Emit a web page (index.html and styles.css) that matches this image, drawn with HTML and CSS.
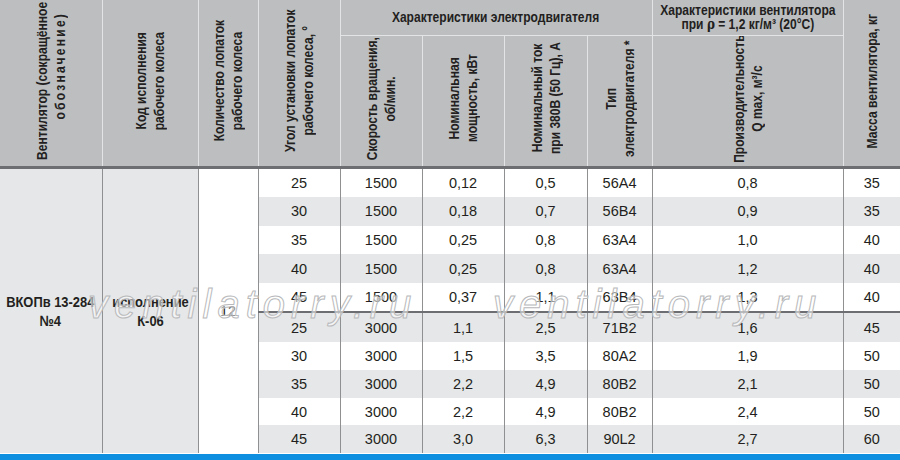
FILE: index.html
```html
<!DOCTYPE html>
<html lang="ru">
<head>
<meta charset="utf-8">
<title>ВКОПв 13-284 №4</title>
<link rel="stylesheet" href="styles.css">
</head>
<body>
<div class="page">
  <div class="sheet">
    <table class="spec">
      <colgroup>
        <col class="c1"><col class="c2"><col class="c3"><col class="c4"><col class="c5">
        <col class="c6"><col class="c7"><col class="c8"><col class="c9"><col class="c10">
      </colgroup>
      <thead>
        <tr class="hr1">
          <th rowspan="2" class="first bottom"><span class="vt">Вентилятор (сокращённое<br><span class="spaced">обозначение)</span></span></th>
          <th rowspan="2" class="bottom"><span class="vt">Код исполнения<br>рабочего колеса</span></th>
          <th rowspan="2" class="bottom"><span class="vt">Количество лопаток<br>рабочего колеса</span></th>
          <th rowspan="2" class="bottom"><span class="vt">Угол установки лопаток<br>рабочего колеса, °</span></th>
          <th colspan="4" class="group"><span class="hs">Характеристики электродвигателя</span></th>
          <th class="group group2"><span class="hs">Характеристики вентилятора<br>при <span class="rho">ρ</span> = 1,2 кг/м³ (20°C)</span></th>
          <th rowspan="2" class="last bottom"><span class="vt">Масса вентилятора, кг</span></th>
        </tr>
        <tr class="hr2">
          <th class="bottom"><span class="vt">Скорость вращения,<br>об/мин.</span></th>
          <th class="bottom"><span class="vt">Номинальная<br>мощность, кВт</span></th>
          <th class="bottom"><span class="vt">Номинальный ток<br>при 380В (50 Гц), А</span></th>
          <th class="bottom"><span class="vt">Тип<br>электродвигателя *</span></th>
          <th class="bottom"><span class="vt">Производительность<br>Q max, м³/с</span></th>
        </tr>
      </thead>
      <tbody>
        <tr>
          <td rowspan="10" class="model first"><span class="hs">ВКОПв 13-284<br>№4</span></td>
          <td rowspan="10" class="model"><span class="hs">исполнение<br>К-06</span></td>
          <td rowspan="10" class="blades">12</td>
          <td>25</td><td>1500</td><td>0,12</td><td>0,5</td><td class="type">56А4</td><td class="type">0,8</td><td class="last">35</td>
        </tr>
        <tr><td>30</td><td>1500</td><td>0,18</td><td>0,7</td><td class="type">56В4</td><td class="type">0,9</td><td class="last">35</td></tr>
        <tr><td>35</td><td>1500</td><td>0,25</td><td>0,8</td><td class="type">63А4</td><td class="type">1,0</td><td class="last">40</td></tr>
        <tr><td>40</td><td>1500</td><td>0,25</td><td>0,8</td><td class="type">63А4</td><td class="type">1,2</td><td class="last">40</td></tr>
        <tr><td>45</td><td>1500</td><td>0,37</td><td>1,1</td><td class="type">63В4</td><td class="type">1,3</td><td class="last">40</td></tr>
        <tr class="sep"><td>25</td><td>3000</td><td>1,1</td><td>2,5</td><td class="type">71В2</td><td class="type">1,6</td><td class="last">45</td></tr>
        <tr class="low"><td>30</td><td>3000</td><td>1,5</td><td>3,5</td><td class="type">80А2</td><td class="type">1,9</td><td class="last">50</td></tr>
        <tr class="low"><td>35</td><td>3000</td><td>2,2</td><td>4,9</td><td class="type">80В2</td><td class="type">2,1</td><td class="last">50</td></tr>
        <tr class="low"><td>40</td><td>3000</td><td>2,2</td><td>4,9</td><td class="type">80В2</td><td class="type">2,4</td><td class="last">50</td></tr>
        <tr class="low"><td>45</td><td>3000</td><td>3,0</td><td>6,3</td><td class="type">90L2</td><td class="type">2,7</td><td class="last">60</td></tr>
      </tbody>
    </table>
    <div class="wm wm1">ventilatorry.ru</div>
    <div class="wm wm2">ventilatorry.ru</div>
  </div>
  <div class="bluebar"></div>
</div>
</body>
</html>
```

FILE: styles.css
```css
html, body {
  margin: 0;
  padding: 0;
  background: #ffffff;
}

.page {
  width: 900px;
  height: 460px;
  overflow: hidden;
  display: flex;
  flex-direction: column;
}

.sheet {
  position: relative;
  flex: 1;
  overflow: hidden;
}

.bluebar {
  height: 6px;
  background: #0f8fe0;
}

.spec {
  width: 900px;
  table-layout: fixed;
  border-collapse: collapse;
  border-spacing: 0;
}

.c1 { width: 102px; }
.c2 { width: 96px; }
.c3 { width: 60px; }
.c4 { width: 82px; }
.c5 { width: 82px; }
.c6 { width: 82px; }
.c7 { width: 83px; }
.c8 { width: 65px; }
.c9 { width: 191px; }
.c10 { width: 57px; }

.spec th {
  background: #bcbec0;
  color: #231f20;
  font-family: "Liberation Sans", Arial, sans-serif;
  font-weight: bold;
  font-size: 14px;
  line-height: 18px;
  padding: 0;
  text-align: center;
  vertical-align: middle;
  border: 1px solid #e3e4e5;
  border-top: none;
  overflow: hidden;
}

.spec .hr1 { height: 35px; }
.spec .hr2 { height: 132px; }

.spec th.bottom {
  border-bottom: 3px solid #6d6e71;
}

.spec th.group {
  line-height: 14px;
  vertical-align: middle;
}

.rho {
  font-family: "DejaVu Serif", serif;
  font-weight: bold;
}

/* condensed bold look: the face is compressed along the reading direction */
.vt {
  display: inline-block;
  writing-mode: vertical-rl;
  transform: rotate(180deg) scaleY(0.86);
  margin: -40px 0;
  text-align: center;
  white-space: nowrap;
}

.hs {
  display: inline-block;
  transform: scaleX(0.86);
  margin: 0 -30px;
  white-space: nowrap;
}

.spaced {
  letter-spacing: 2.6px;
  padding-inline-start: 36px;
}

.spec .first { border-left: none; }
.spec .last { border-right: none; }

.spec td {
  height: 28.6px;
  padding: 0;
  text-align: center;
  vertical-align: middle;
  font-family: "Liberation Sans", Arial, sans-serif;
  font-size: 14.5px;
  color: #231f20;
  border-left: 1px solid #8f9092;
  border-right: 1px solid #8f9092;
  background: #ffffff;
}

.spec tbody tr:nth-child(even) td {
  background: #e6e7e8;
}

.spec tbody tr.low td { height: 27.8px; }

.spec td.type {
  border-left-color: #b5b6b8;
}

.spec tbody td.model {
  background: #e6e7e8;
  font-weight: bold;
  font-size: 15px;
  line-height: 19px;
}

.spec tbody td.blades {
  background: #ffffff;
}

.spec tr.sep td {
  border-top: 2px solid #6d6e71;
}

.wm {
  position: absolute;
  top: 284px;
  font-family: "Liberation Sans", Arial, sans-serif;
  font-style: italic;
  font-size: 40px;
  line-height: 40px;
  letter-spacing: 6px;
  color: rgba(255, 255, 255, 0.55);
  -webkit-text-stroke: 1px #b8b9bb;
  white-space: nowrap;
  pointer-events: none;
}

.wm1 { left: 88px; }
.wm2 { left: 493px; }
```
